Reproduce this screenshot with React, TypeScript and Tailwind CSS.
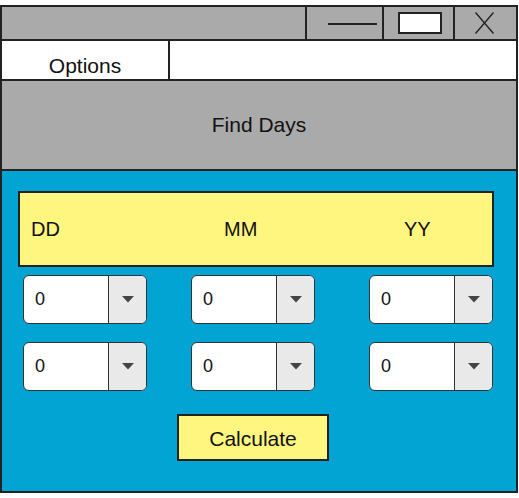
import React from "react";

const font = { fontFamily: '"Liberation Sans", Arial, sans-serif' };

function Select({ className = "" }: { className?: string }) {
  return (
    <div
      className={`flex h-[49px] w-[124px] overflow-hidden rounded-[6px] border-[1.5px] border-[#333] bg-white ${className}`}
    >
      <div className="flex flex-1 items-center pl-[11px] text-[18px] text-[#111]">0</div>
      <div className="flex w-[38px] items-center justify-center border-l-[1.5px] border-[#333] bg-[#e9e9e9]">
        <svg width="12" height="7" viewBox="0 0 12 7">
          <path d="M0 0 H12 L6 6.5 Z" fill="#444" />
        </svg>
      </div>
    </div>
  );
}

function SelectRow() {
  return (
    <div className="flex">
      <Select className="ml-[21px]" />
      <Select className="ml-[44px]" />
      <Select className="ml-[54px]" />
    </div>
  );
}

export default function App() {
  return (
    <div className="h-[498px] w-[519px] bg-white pt-[5px]" style={font}>
      {/* Window */}
      <div className="flex h-[488px] w-[518px] flex-col border-2 border-[#222]">
        {/* Title bar */}
        <div className="flex h-[34px] border-b-2 border-[#222] bg-[#aaaaaa]">
          <div className="flex-1" />
          <div className="flex w-[77px] items-center justify-end border-l-2 border-[#222] pr-[5px]">
            <div className="mt-[1px] h-[2px] w-[49px] bg-[#222]" />
          </div>
          <div className="flex w-[71px] items-center border-l-2 border-[#222] pl-[14px]">
            <div className="h-[22px] w-[44px] border-2 border-[#222] bg-white" />
          </div>
          <div className="flex w-[63px] items-center border-l-2 border-[#222] pl-[20px]">
            <svg width="19" height="22" viewBox="0 0 19 22">
              <path d="M0.5 0.5 L18.5 21.5 M18.5 0.5 L0.5 21.5" stroke="#222" strokeWidth="1.4" fill="none" />
            </svg>
          </div>
        </div>

        {/* Menu row */}
        <div className="flex h-[40px] border-b-2 border-[#222] bg-white">
          <div className="flex w-[168px] items-end justify-center border-r-2 border-[#222] pb-[1px] text-[21px] leading-[24px] text-[#111]">
            Options
          </div>
          <div className="flex-1" />
        </div>

        {/* Header */}
        <div className="flex h-[90px] items-center justify-center border-b-2 border-[#222] bg-[#aaaaaa] text-[21px] text-[#111]">
          Find Days
        </div>

        {/* Body */}
        <div className="flex flex-1 flex-col bg-[#02a4d3]">
          <div className="ml-[16px] mt-[20px] flex h-[76px] w-[476px] items-center border-2 border-[#222] bg-[#fff680] pl-[11px] text-[20px] text-[#111]">
            <span className="w-[193px]">DD</span>
            <span className="w-[180px]">MM</span>
            <span>YY</span>
          </div>

          <div className="mt-[8px] flex flex-col gap-[18px]">
            <SelectRow />
            <SelectRow />
          </div>

          <div className="ml-[175px] mt-[23px] flex h-[47px] w-[152px] items-center justify-center border-2 border-[#222] bg-[#fff680] pt-[3px] text-[21px] text-[#111]">
            Calculate
          </div>
        </div>
      </div>
    </div>
  );
}
